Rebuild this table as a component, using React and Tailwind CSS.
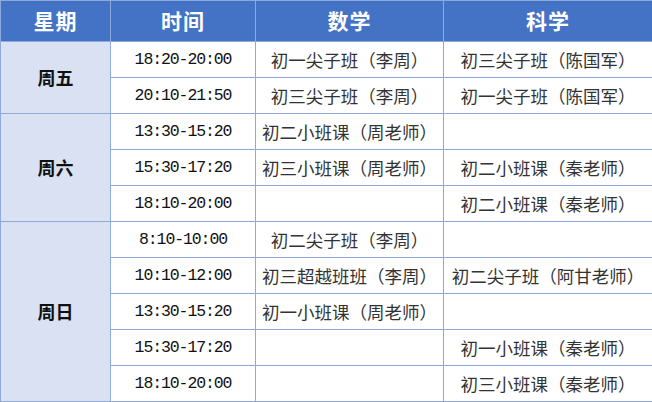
const ROWS = [
  { day: "周五", slots: [
    ["18:20-20:00", "初一尖子班（李周）", "初三尖子班（陈国军）"],
    ["20:10-21:50", "初三尖子班（李周）", "初一尖子班（陈国军）"],
  ] },
  { day: "周六", slots: [
    ["13:30-15:20", "初二小班课（周老师）", ""],
    ["15:30-17:20", "初三小班课（周老师）", "初二小班课（秦老师）"],
    ["18:10-20:00", "", "初二小班课（秦老师）"],
  ] },
  { day: "周日", slots: [
    ["8:10-10:00", "初二尖子班（李周）", ""],
    ["10:10-12:00", "初三超越班班（李周）", "初二尖子班（阿甘老师）"],
    ["13:30-15:20", "初一小班课（周老师）", ""],
    ["15:30-17:20", "", "初一小班课（秦老师）"],
    ["18:10-20:00", "", "初三小班课（秦老师）"],
  ] },
];

const cell = "border border-[#8eaadb] text-center align-middle p-0 whitespace-nowrap";
const cjk = "font-['Noto_Sans_CJK_SC',sans-serif]";

export default function App() {
  return (
    <div className="w-[652px] h-[402px] bg-white overflow-hidden">
      <table className="w-[652px] border-collapse table-fixed">
        <colgroup>
          <col className="w-[110px]" />
          <col className="w-[145px]" />
          <col className="w-[188px]" />
          <col className="w-[209px]" />
        </colgroup>
        <thead>
          <tr className="h-[41px] bg-[#4472c4]">
            {["星期", "时间", "数学", "科学"].map((h) => (
              <th key={h} className={`${cell} ${cjk} text-white text-[21px] font-bold tracking-[1px]`}>
                {h}
              </th>
            ))}
          </tr>
        </thead>
        <tbody>
          {ROWS.map((g) =>
            g.slots.map((s, i) => (
              <tr key={g.day + i} className="h-[36px]">
                {i === 0 && (
                  <td rowSpan={g.slots.length} className={`${cell} ${cjk} bg-[#d9e1f2] text-[18px] font-bold text-[#111]`}>
                    {g.day}
                  </td>
                )}
                <td className={`${cell} font-['Liberation_Mono',monospace] text-[16.5px] tracking-[-1.1px] pt-[2px] text-[#111]`}>
                  {s[0]}
                </td>
                <td className={`${cell} ${cjk} text-[17.5px] pt-[1px] text-[#333]`}>{s[1]}</td>
                <td className={`${cell} ${cjk} text-[17.5px] pt-[1px] text-[#333]`}>{s[2]}</td>
              </tr>
            ))
          )}
        </tbody>
      </table>
    </div>
  );
}
